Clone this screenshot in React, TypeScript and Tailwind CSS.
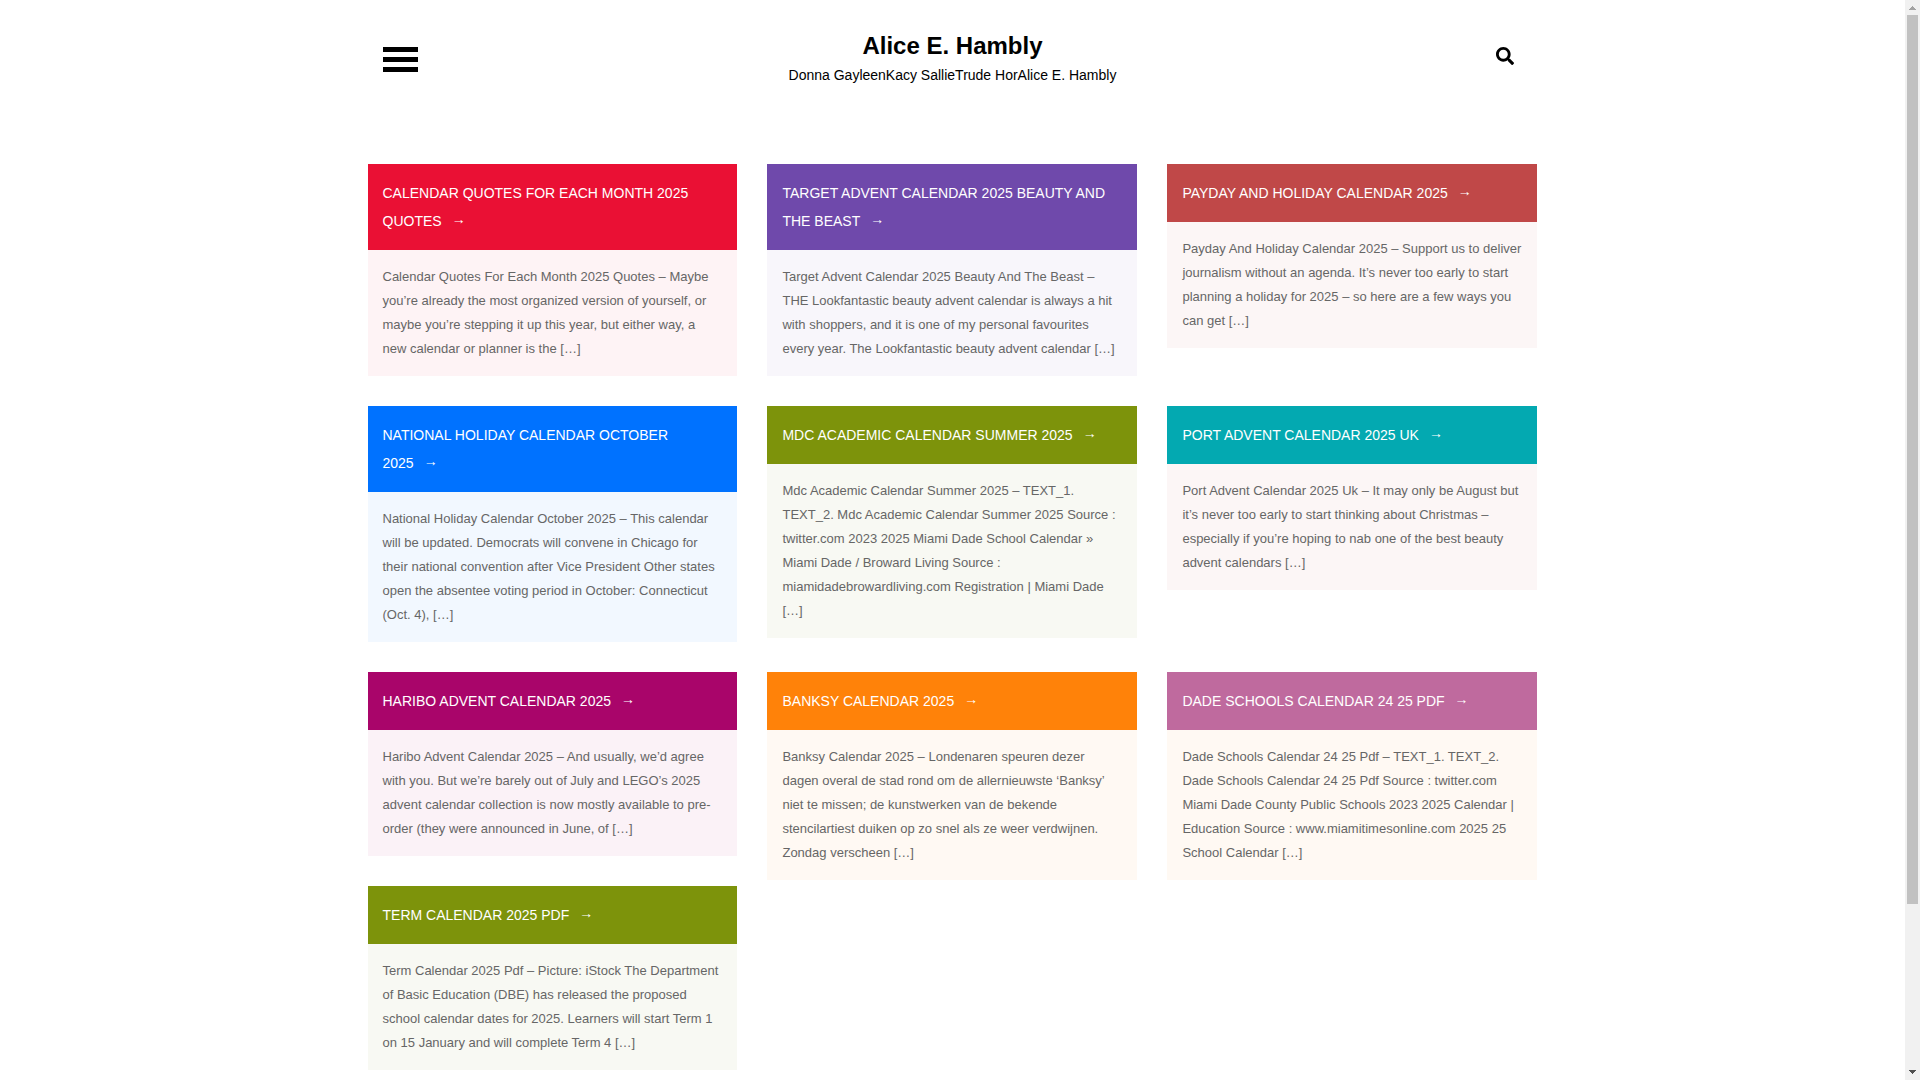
import { FaSearch } from 'react-icons/fa';

const posts = [
  {
    title: 'Calendar Quotes For Each Month 2025 Quotes',
    excerpt:
      'Calendar Quotes For Each Month 2025 Quotes – Maybe you’re already the most organized version of yourself, or maybe you’re stepping it up this year, but either way, a new calendar or planner is the […]',
    head: 'bg-[#ea1034]',
    body: 'bg-[#fef3f5]',
  },
  {
    title: 'Target Advent Calendar 2025 Beauty And The Beast',
    excerpt:
      'Target Advent Calendar 2025 Beauty And The Beast – THE Lookfantastic beauty advent calendar is always a hit with shoppers, and it is one of my personal favourites every year. The Lookfantastic beauty advent calendar […]',
    head: 'bg-[#6f49ab]',
    body: 'bg-[#f8f6fb]',
  },
  {
    title: 'Payday And Holiday Calendar 2025',
    excerpt:
      'Payday And Holiday Calendar 2025 – Support us to deliver journalism without an agenda. It’s never too early to start planning a holiday for 2025 – so here are a few ways you can get […]',
    head: 'bg-[#c04848]',
    body: 'bg-[#fcf6f6]',
  },
  {
    title: 'National Holiday Calendar October 2025',
    excerpt:
      'National Holiday Calendar October 2025 – This calendar will be updated. Democrats will convene in Chicago for their national convention after Vice President Other states open the absentee voting period in October: Connecticut (Oct. 4), […]',
    head: 'bg-[#0072ff]',
    body: 'bg-[#f2f8ff]',
  },
  {
    title: 'Mdc Academic Calendar Summer 2025',
    excerpt:
      'Mdc Academic Calendar Summer 2025 – TEXT_1. TEXT_2. Mdc Academic Calendar Summer 2025 Source : twitter.com 2023 2025 Miami Dade School Calendar » Miami Dade / Broward Living Source : miamidadebrowardliving.com Registration | Miami Dade […]',
    head: 'bg-[#7d930b]',
    body: 'bg-[#f8f9f3]',
  },
  {
    title: 'Port Advent Calendar 2025 Uk',
    excerpt:
      'Port Advent Calendar 2025 Uk – It may only be August but it’s never too early to start thinking about Christmas – especially if you’re hoping to nab one of the best beauty advent calendars […]',
    head: 'bg-[#03a9b1]',
    body: 'bg-[#fcf6f6]',
  },
  {
    title: 'Haribo Advent Calendar 2025',
    excerpt:
      'Haribo Advent Calendar 2025 – And usually, we’d agree with you. But we’re barely out of July and LEGO’s 2025 advent calendar collection is now mostly available to pre-order (they were announced in June, of […]',
    head: 'bg-[#a9056a]',
    body: 'bg-[#fbf2f7]',
  },
  {
    title: 'Banksy Calendar 2025',
    excerpt:
      'Banksy Calendar 2025 – Londenaren speuren dezer dagen overal de stad rond om de allernieuwste ‘Banksy’ niet te missen; de kunstwerken van de bekende stencilartiest duiken op zo snel als ze weer verdwijnen. Zondag verscheen […]',
    head: 'bg-[#ff8209]',
    body: 'bg-[#fff9f3]',
  },
  {
    title: 'Dade Schools Calendar 24 25 Pdf',
    excerpt:
      'Dade Schools Calendar 24 25 Pdf – TEXT_1. TEXT_2. Dade Schools Calendar 24 25 Pdf Source : twitter.com Miami Dade County Public Schools 2023 2025 Calendar | Education Source : www.miamitimesonline.com 2025 25 School Calendar […]',
    head: 'bg-[#bf6a9e]',
    body: 'bg-[#fff9f3]',
  },
  {
    title: 'Term Calendar 2025 Pdf',
    excerpt:
      'Term Calendar 2025 Pdf – Picture: iStock The Department of Basic Education (DBE) has released the proposed school calendar dates for 2025. Learners will start Term 1 on 15 January and will complete Term 4 […]',
    head: 'bg-[#7d930b]',
    body: 'bg-[#f8f9f3]',
  },
];

type Post = (typeof posts)[number];

// nine cells in three rows, the tenth post stacks under the seventh
const cells: Post[][] = posts.slice(0, 9).map((post, i) => (i === 6 ? [post, posts[9]] : [post]));

function Header() {
  return (
    <header className="mx-auto grid max-w-[1170px] grid-cols-[1fr_auto_1fr] items-start px-[15px] pt-[30px] text-black">
      <div className="pt-[17px]">
        <button aria-label="Open menu" className="flex w-[35px] flex-col gap-[5px]">
          <span className="h-[5px] w-full bg-black" />
          <span className="h-[5px] w-full bg-black" />
          <span className="h-[5px] w-full bg-black" />
        </button>
      </div>
      <div className="text-center">
        <h1 className="text-[24px] leading-[31px] font-bold">
          <a href="#">Alice E. Hambly</a>
        </h1>
        <p className="text-[14px] leading-[28px]">Donna GayleenKacy SallieTrude HorAlice E. Hambly</p>
      </div>
      <div className="flex justify-end pt-[17px] pr-[9px]">
        <button aria-label="Search">
          <FaSearch size={18} />
        </button>
      </div>
    </header>
  );
}

function PostCard({ post }: { post: Post }) {
  return (
    <article className="mb-[30px]">
      <h2 className={`p-[15px] text-[14px] leading-[28px] text-white uppercase ${post.head}`}>
        <a href="#">
          {post.title}
          <span className="ml-[10px] align-[2px] leading-none">→</span>
        </a>
      </h2>
      <p className={`p-[15px] text-[13px] leading-[24px] text-[#666666] ${post.body}`}>{post.excerpt}</p>
    </article>
  );
}

function Scrollbar() {
  return (
    <div aria-hidden="true" className="flex w-[15px] shrink-0 flex-col bg-[#f1f1f1]">
      <svg className="h-[15px] w-[15px]" viewBox="0 0 15 15" shapeRendering="crispEdges" fill="#a3a3a3">
        <path d="M7 6h1v1h1v1h1v1h1v1H4V9h1V8h1V7h1z" />
      </svg>
      <div className="mx-[2px] flex-[889] bg-[#c1c1c1]" />
      <div className="flex-[161]" />
      <svg className="h-[15px] w-[15px]" viewBox="0 0 15 15" shapeRendering="crispEdges" fill="#505050">
        <path d="M4 5h7v1h-1v1H9v1H8v1H7V8H6V7H5V6H4z" />
      </svg>
    </div>
  );
}

export default function App() {
  return (
    <div className="flex h-screen bg-white font-['Liberation_Sans',Arial,sans-serif]">
      <div className="min-w-0 flex-1 overflow-hidden">
        <Header />
        <main className="mx-auto mt-[75px] flex max-w-[1200px] flex-wrap">
          {cells.map((cell) => (
            <div key={cell[0].title} className="w-full px-[15px] md:w-[33.33%]">
              {cell.map((post) => (
                <PostCard key={post.title} post={post} />
              ))}
            </div>
          ))}
        </main>
      </div>
      <Scrollbar />
    </div>
  );
}
